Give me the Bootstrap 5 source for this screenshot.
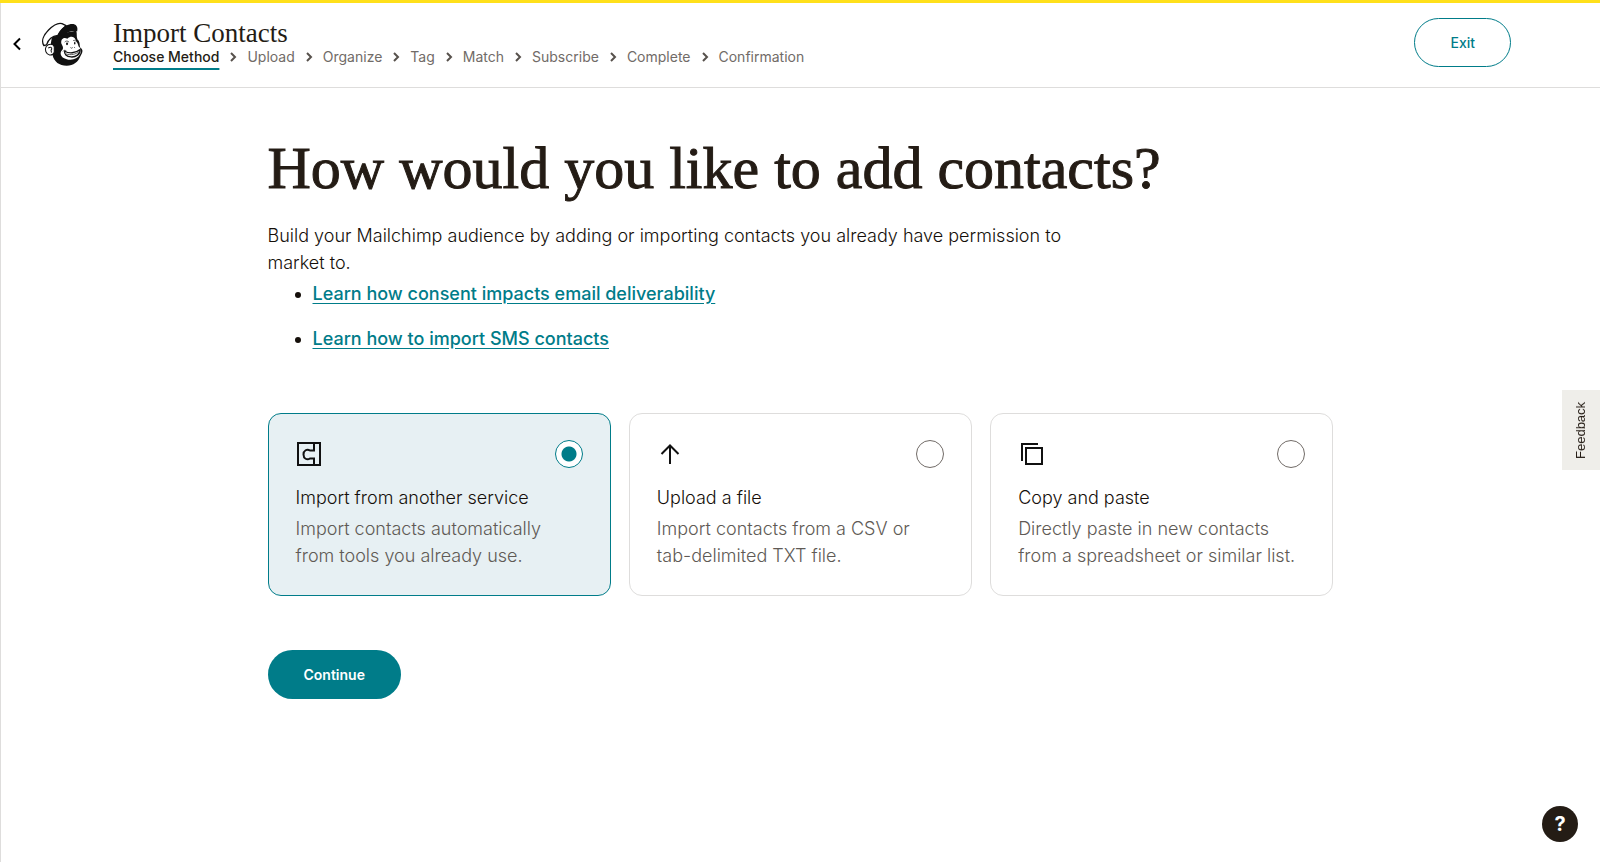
<!DOCTYPE html>
<html lang="en">
<head>
<meta charset="utf-8">
<meta name="viewport" content="width=device-width, initial-scale=1">
<title>Import Contacts</title>
<link rel="stylesheet" href="https://cdn.jsdelivr.net/npm/bootstrap@5.3.0/dist/css/bootstrap.min.css">
<style>
  :root { --ink: #241c15; --muted: #716b67; --teal: #007c89; --rule: #dedddc; }
  body { font-family: Inter, "Liberation Sans", sans-serif; font-size: 18px; font-weight: 300; line-height: 27px; color: #150f0a; border-top: 3px solid #ffe01b; }
  a { color: var(--teal); }
  .page { border-left: 1px solid var(--rule); }
  .topbar { height: 85px; border-bottom: 1px solid var(--rule); padding: 0 89px 2px 8px; }
  .serif { font-family: "Liberation Serif", serif; color: var(--ink); }
  .bar-text { padding: 0 0 2px 5px; }
  .bar-title { font-size: 27px; font-weight: 400; line-height: 27px; }
  .steps { font-size: 14px; font-weight: 400; line-height: 20px; gap: 10px; }
  .steps a { color: var(--muted); text-decoration: none; }
  .steps .active a { color: var(--ink); font-weight: 500; text-decoration: underline 2px var(--teal); text-underline-offset: 6px; }
  .steps li { display: flex; align-items: center; gap: 10px; }
  .pill { height: 49px; border-radius: 25px; font-size: 14px; font-weight: 600; padding: 0 35px; }
  .pill-outline { border: 1px solid var(--teal); color: var(--teal); font-weight: 500; }
  .pill-solid, .pill-solid:hover { background: var(--teal); color: #fff; }
  .headline { font-size: 60px; line-height: 64px; margin-bottom: 22px; -webkit-text-stroke: 1px var(--ink); }
  .intro { max-width: 820px; }
  .links { padding-left: 45px; font-weight: 500; margin-bottom: 61px; }
  .links li + li { margin-top: 18px; }
  .links a { text-underline-offset: 3px; }
  .choices { gap: 18px; margin-bottom: 54px; }
  .choice { flex: 1 1 0; border: 1px solid var(--rule); border-radius: 13px; padding: 26px 27px; cursor: pointer; }
  .choice:has(input:checked) { background: #e7f0f3; border-color: var(--teal); }
  .choice input { appearance: none; width: 28px; height: 28px; border: 1px solid var(--muted); border-radius: 50%; background: #fff; margin: 0; }
  .choice input:checked { border-color: var(--teal); background: radial-gradient(circle, var(--teal) 7px, #fff 8px); }
  .choice-text { color: #605a55; }
  .feedback { writing-mode: vertical-rl; transform: rotate(180deg); right: 0; top: 390px; width: 38px; height: 80px; background: #efeeea; border: 0; font: 13px/38px "Liberation Sans", sans-serif; color: var(--ink); padding: 0; }
  .help { right: 22px; bottom: 20px; width: 36px; height: 36px; background: var(--ink); color: #fff; border: 0; font-size: 20px; font-weight: 700; line-height: 36px; padding: 0; }
</style>
</head>
<body>
<div class="page min-vh-100">
  <header class="topbar d-flex align-items-center">
    <a href="#" aria-label="Back" class="d-flex me-3">
      <svg width="16" height="16" viewBox="0 0 16 16" fill="none" stroke="#000" stroke-width="2"><path d="M11 2.500L5.500 8l5.500 5.500"/></svg>
    </a>
    <a href="#" aria-label="Mailchimp" class="d-flex">
      <svg width="43" height="45" viewBox="34 36 127 134">
        <path d="M66 84C72 74 84 76 92 70L138 62C142 70 138 78 142 88C150 94 148 104 150 112C160 118 158 126 152 136C144 156 130 166 110 166C88 166 72 154 68 134C60 128 62 96 66 84Z" fill="#111"/>
        <path d="M42 106C34 94 40 76 56 60C70 46 86 38 96 41L108 47C98 56 90 66 84 76C68 78 55 88 50 104Z" fill="#fff" stroke="#111" stroke-width="4" stroke-linejoin="round"/>
        <path d="M82 77C88 60 102 46 122 42C136 40 145 48 141 64C122 60 106 70 98 79C94 75 88 75 82 77Z" fill="#111"/>
        <path d="M94 100C92 88 100 80 112 86C120 78 132 78 136 88C138 96 144 98 145 108C154 116 154 124 149 133C142 147 124 152 108 146C92 142 88 128 96 120C102 114 98 108 94 100Z" fill="#fff"/>
        <path d="M73 110C70 100 56 100 49 109C43 119 49 132 59 134C67 135 71 132 73 126Z" fill="#fff" stroke="#111" stroke-width="3"/>
        <path d="M55 114C62 108 67 112 65 118C61 119 66 125 64 127" fill="none" stroke="#111" stroke-width="3"/>
        <path d="M104 123C116 130 136 130 150 118C151 132 137 141 123 140C109 139 102 132 104 123Z" fill="#fff" stroke="#111" stroke-width="4"/>
        <path d="M108 131C122 136 138 132 147 124M99 124C101 119 106 120 109 122M104 96C108 91 113 92 117 96M129 92C132 89 135 91 137 93M121 112Q124 116 128 112M132 111L135 113" fill="none" stroke="#111" stroke-width="2"/>
        <ellipse cx="111" cy="101" rx="3" ry="4" fill="#111"/><ellipse cx="134" cy="99" rx="2" ry="4" fill="#111"/>
      </svg>
    </a>
    <div class="bar-text ms-4">
      <div class="serif bar-title">Import Contacts</div>
      <ol class="steps list-unstyled d-flex mb-0">
        <li class="active"><a href="#" aria-current="step">Choose Method</a></li>
        <li><svg width="8" height="10" viewBox="0 0 8 10" fill="none" stroke="#57514c" stroke-width="2"><path d="M2 1l4 4-4 4"/></svg><a href="#">Upload</a></li>
        <li><svg width="8" height="10" viewBox="0 0 8 10" fill="none" stroke="#57514c" stroke-width="2"><path d="M2 1l4 4-4 4"/></svg><a href="#">Organize</a></li>
        <li><svg width="8" height="10" viewBox="0 0 8 10" fill="none" stroke="#57514c" stroke-width="2"><path d="M2 1l4 4-4 4"/></svg><a href="#">Tag</a></li>
        <li><svg width="8" height="10" viewBox="0 0 8 10" fill="none" stroke="#57514c" stroke-width="2"><path d="M2 1l4 4-4 4"/></svg><a href="#">Match</a></li>
        <li><svg width="8" height="10" viewBox="0 0 8 10" fill="none" stroke="#57514c" stroke-width="2"><path d="M2 1l4 4-4 4"/></svg><a href="#">Subscribe</a></li>
        <li><svg width="8" height="10" viewBox="0 0 8 10" fill="none" stroke="#57514c" stroke-width="2"><path d="M2 1l4 4-4 4"/></svg><a href="#">Complete</a></li>
        <li><svg width="8" height="10" viewBox="0 0 8 10" fill="none" stroke="#57514c" stroke-width="2"><path d="M2 1l4 4-4 4"/></svg><a href="#">Confirmation</a></li>
      </ol>
    </div>
    <button type="button" class="btn pill pill-outline ms-auto mb-1">Exit</button>
  </header>

  <div class="row g-0 justify-content-center">
    <main class="col-8 pt-5">
      <h1 class="headline serif fw-normal">How would you like to add contacts?</h1>
      <p class="intro mb-1">Build your Mailchimp audience by adding or importing contacts you already have permission to market to.</p>
      <ul class="links">
        <li><a href="#">Learn how consent impacts email deliverability</a></li>
        <li><a href="#">Learn how to import SMS contacts</a></li>
      </ul>
      <form>
        <div class="choices d-flex">
          <label class="choice">
            <span class="d-flex justify-content-between align-items-center mb-3">
              <svg width="26" height="26" viewBox="0 0 26 26" fill="none" stroke="#111" stroke-width="2"><path d="M2 2h22v22H2zM18 2v7.500h-4c-3 -2 -6.500 0 -6.500 4s3.500 6 6.500 4h4V24"/></svg>
              <input type="radio" name="method" checked>
            </span>
            <span class="d-block mb-1">Import from another service</span>
            <span class="choice-text d-block">Import contacts automatically from tools you already use.</span>
          </label>
          <label class="choice">
            <span class="d-flex justify-content-between align-items-center mb-3">
              <svg width="26" height="26" viewBox="0 0 26 26" fill="none" stroke="#111" stroke-width="2"><path d="M13 23V4.500M4.500 13L13 4.500l8.500 8.500"/></svg>
              <input type="radio" name="method">
            </span>
            <span class="d-block mb-1">Upload a file</span>
            <span class="choice-text d-block">Import contacts from a CSV or tab-delimited TXT file.</span>
          </label>
          <label class="choice">
            <span class="d-flex justify-content-between align-items-center mb-3">
              <svg width="26" height="26" viewBox="0 0 26 26" fill="none" stroke="#111" stroke-width="2"><path d="M8 7h16v16H8zM4 20V3h16"/></svg>
              <input type="radio" name="method">
            </span>
            <span class="d-block mb-1">Copy and paste</span>
            <span class="choice-text d-block">Directly paste in new contacts from a spreadsheet or similar list.</span>
          </label>
        </div>
        <button type="button" class="btn pill pill-solid">Continue</button>
      </form>
    </main>
  </div>
</div>
<button type="button" class="feedback position-fixed">Feedback</button>
<button type="button" class="help position-fixed rounded-circle" aria-label="Help">?</button>
<script src="https://cdn.jsdelivr.net/npm/bootstrap@5.3.0/dist/js/bootstrap.bundle.min.js"></script>
</body>
</html>
